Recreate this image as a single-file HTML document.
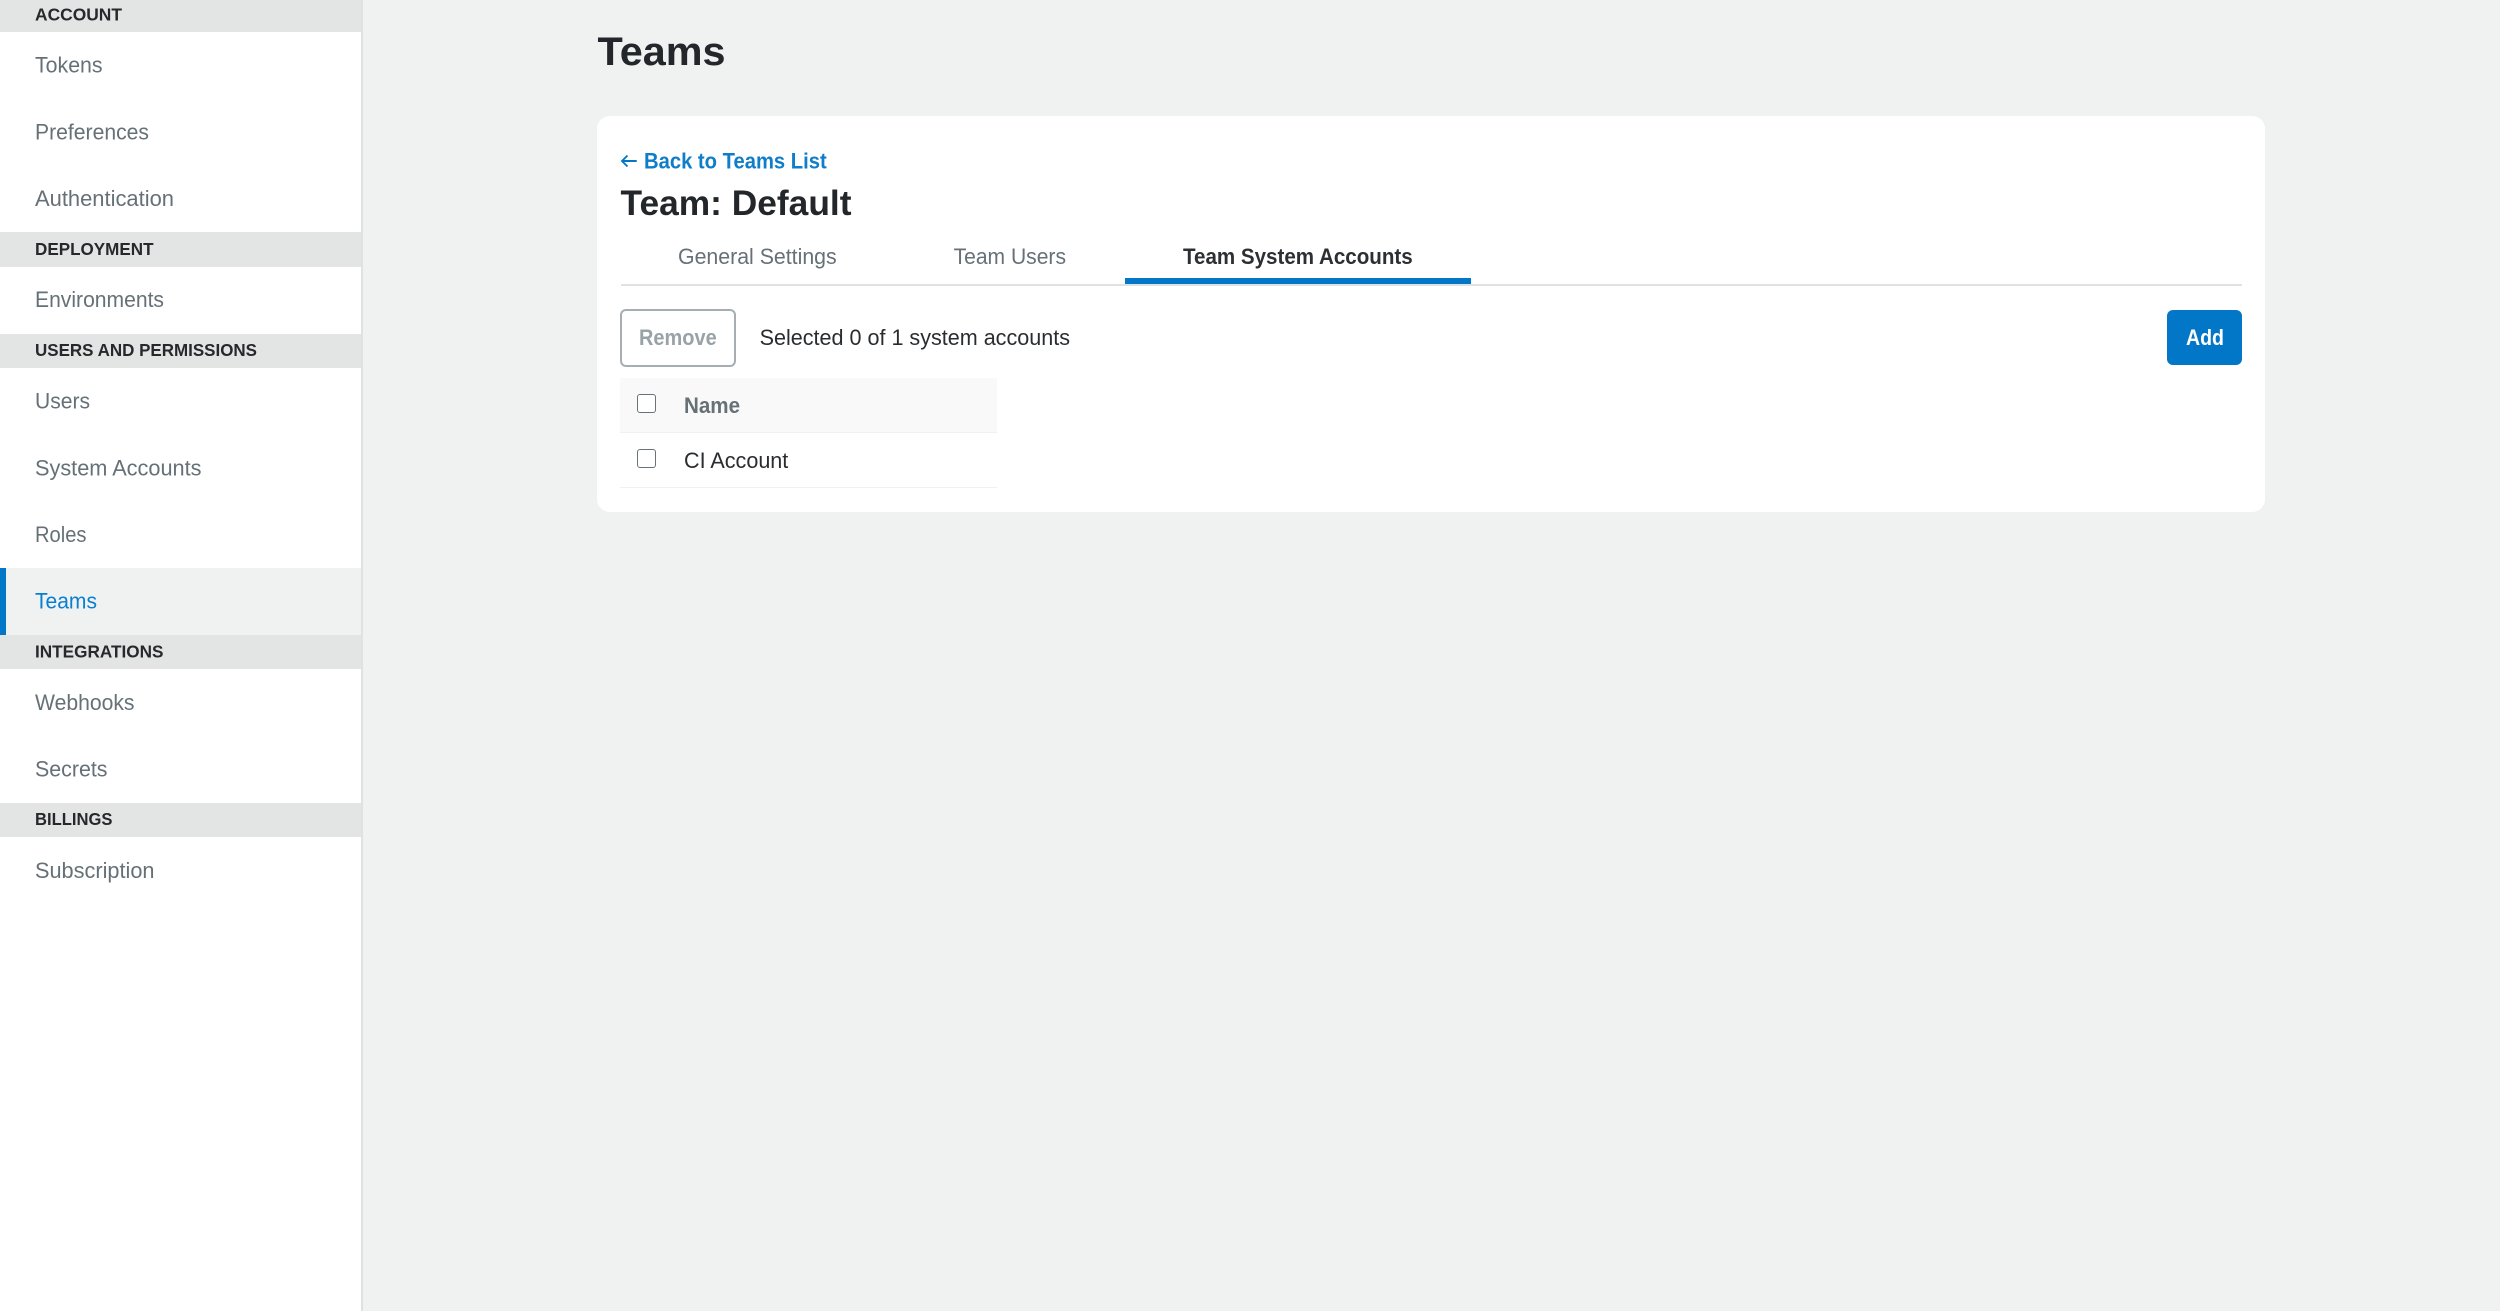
<!DOCTYPE html>
<html lang="en">
<head>
<meta charset="utf-8">
<title>Teams</title>
<style>
html,body{margin:0;padding:0;width:2500px;height:1311px;overflow:hidden;background:#f0f2f2;font-family:"Liberation Sans",sans-serif}
.b{position:absolute;display:block;box-sizing:border-box}
svg.t{position:absolute;left:0;top:0;width:2500px;height:1311px;filter:blur(.35px)}
svg.t text{font-family:"Liberation Sans",sans-serif}
.item{font-size:22.4px;fill:#667177}
.head{font-size:17.6px;font-weight:700;fill:#26292c}
.cb{width:19px;height:19px;left:637px;background:#fff;border:1.6px solid #697277;border-radius:3px}
</style>
</head>
<body>
<!-- sidebar -->
<div class="b" style="left:0;top:0;width:361px;height:1311px;background:#fff"></div>
<div class="b" style="left:361px;top:0;width:1.5px;height:1311px;background:#dfe2e2"></div>
<div class="b" style="left:0;top:0;width:361px;height:32px;background:#e3e5e5"></div>
<div class="b" style="left:0;top:232px;width:361px;height:34.5px;background:#e3e5e5"></div>
<div class="b" style="left:0;top:333.5px;width:361px;height:34.5px;background:#e3e5e5"></div>
<div class="b" style="left:0;top:568px;width:361px;height:66.7px;background:#f0f2f2"></div>
<div class="b" style="left:0;top:568px;width:6px;height:66.7px;background:#0277c7"></div>
<div class="b" style="left:0;top:634.7px;width:361px;height:34.3px;background:#e3e5e5"></div>
<div class="b" style="left:0;top:802.7px;width:361px;height:34.3px;background:#e3e5e5"></div>
<!-- card -->
<div class="b" style="left:596.5px;top:116px;width:1668.5px;height:395.5px;background:#fff;border-radius:13px"></div>
<div class="b" style="left:620.5px;top:283.5px;width:1621.5px;height:2px;background:#dfe2e2"></div>
<div class="b" style="left:1124.7px;top:278.3px;width:346.6px;height:6px;background:#0277c7"></div>
<div class="b" style="left:620px;top:309px;width:116px;height:57.5px;border:2px solid #a6aeb2;border-radius:6px;background:#fff"></div>
<div class="b" style="left:2167.2px;top:310px;width:75px;height:55.4px;border-radius:6px;background:#0277c7"></div>
<div class="b" style="left:620px;top:378.3px;width:376.7px;height:54px;background:#f9f9f9"></div>
<div class="b" style="left:620px;top:432px;width:376.7px;height:1px;background:#f0f0f0"></div>
<div class="b" style="left:620px;top:487px;width:376.7px;height:1px;background:#f0f0f0"></div>
<div class="b cb" style="top:394.3px"></div>
<div class="b cb" style="top:449.3px"></div>
<svg class="t" viewBox="0 0 2500 1311" xmlns="http://www.w3.org/2000/svg">
  <text class="head" x="35" y="20.4" textLength="87" lengthAdjust="spacingAndGlyphs">ACCOUNT</text>
  <text class="item" x="35" y="72.6" textLength="67.6" lengthAdjust="spacingAndGlyphs">Tokens</text>
  <text class="item" x="35" y="139.3" textLength="114" lengthAdjust="spacingAndGlyphs">Preferences</text>
  <text class="item" x="35" y="206" textLength="139" lengthAdjust="spacingAndGlyphs">Authentication</text>
  <text class="head" x="35" y="255.1" textLength="118.5" lengthAdjust="spacingAndGlyphs">DEPLOYMENT</text>
  <text class="item" x="35" y="307" textLength="129" lengthAdjust="spacingAndGlyphs">Environments</text>
  <text class="head" x="35" y="355.8" textLength="222" lengthAdjust="spacingAndGlyphs">USERS AND PERMISSIONS</text>
  <text class="item" x="35" y="408.7" textLength="55" lengthAdjust="spacingAndGlyphs">Users</text>
  <text class="item" x="35" y="475.3" textLength="166.5" lengthAdjust="spacingAndGlyphs">System Accounts</text>
  <text class="item" x="35" y="542" textLength="51.5" lengthAdjust="spacingAndGlyphs">Roles</text>
  <text class="item" x="35" y="608.4" textLength="62" lengthAdjust="spacingAndGlyphs" style="fill:#0a7fd0">Teams</text>
  <text class="head" x="35" y="657.3" textLength="128.5" lengthAdjust="spacingAndGlyphs">INTEGRATIONS</text>
  <text class="item" x="35" y="710" textLength="99.5" lengthAdjust="spacingAndGlyphs">Webhooks</text>
  <text class="item" x="35" y="776.6" textLength="72.5" lengthAdjust="spacingAndGlyphs">Secrets</text>
  <text class="head" x="35" y="825" textLength="77.5" lengthAdjust="spacingAndGlyphs">BILLINGS</text>
  <text class="item" x="35" y="878" textLength="119.5" lengthAdjust="spacingAndGlyphs">Subscription</text>

  <text x="597.5" y="65" font-size="40" font-weight="700" fill="#23262a" textLength="128" lengthAdjust="spacingAndGlyphs">Teams</text>

  <path d="M636.7 161H622M627.5 155.5L622 161L627.5 166.5" fill="none" stroke="#0277c7" stroke-width="1.9"/>
  <text x="644" y="168.3" font-size="22.4" font-weight="700" fill="#0f7dca" textLength="182.7" lengthAdjust="spacingAndGlyphs">Back to Teams List</text>
  <text x="620.5" y="215" font-size="35.2" font-weight="700" fill="#23262a" textLength="231" lengthAdjust="spacingAndGlyphs">Team: Default</text>

  <text class="item" x="678" y="264" textLength="158.7" lengthAdjust="spacingAndGlyphs">General Settings</text>
  <text class="item" x="953.6" y="264" textLength="112.4" lengthAdjust="spacingAndGlyphs">Team Users</text>
  <text x="1183" y="264" font-size="22.4" font-weight="700" fill="#2d3033" textLength="229.7" lengthAdjust="spacingAndGlyphs">Team System Accounts</text>

  <text x="639" y="345" font-size="22.4" font-weight="700" fill="#98a2a7" textLength="77.7" lengthAdjust="spacingAndGlyphs">Remove</text>
  <text x="759.6" y="345" font-size="22.4" fill="#2a2d30" textLength="310.4" lengthAdjust="spacingAndGlyphs">Selected 0 of 1 system accounts</text>
  <text x="2186" y="345" font-size="22.4" font-weight="700" fill="#ffffff" textLength="38" lengthAdjust="spacingAndGlyphs">Add</text>

  <text x="684" y="413" font-size="22.4" font-weight="700" fill="#667177" textLength="56" lengthAdjust="spacingAndGlyphs">Name</text>
  <text x="684" y="468" font-size="22.4" fill="#2a2d30" textLength="104.3" lengthAdjust="spacingAndGlyphs">CI Account</text>
</svg>
</body>
</html>
